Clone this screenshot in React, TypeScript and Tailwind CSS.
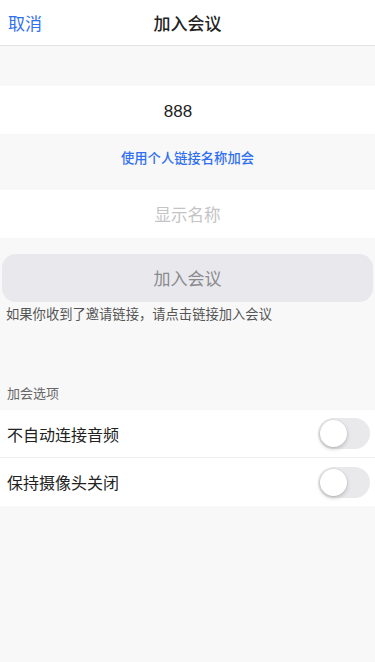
import React from "react";

const font = { fontFamily: '"Noto Sans CJK SC", "Noto Sans", sans-serif' };

function Toggle() {
  return (
    <div className="w-[52px] h-[31px] rounded-full bg-[#e9e9eb] relative shrink-0">
      <div className="absolute left-[2px] top-[2px] w-[27px] h-[27px] rounded-full bg-white shadow-[0_2px_4px_rgba(0,0,0,0.2),0_0_0_0.5px_rgba(0,0,0,0.06)]" />
    </div>
  );
}

export default function App() {
  return (
    <div className="w-[375px] h-[662px] bg-[#f8f8f8] flex flex-col" style={font}>
      <div className="h-[46px] bg-white border-b border-[#e3e3e3] flex items-center relative shrink-0">
        <span className="absolute left-[8px] text-[17px] text-[#2f6ff0]">取消</span>
        <span className="w-full text-center text-[17px] font-medium text-[#222]">加入会议</span>
      </div>
      <div className="h-[40px] shrink-0" />
      <div className="h-[48px] bg-white flex items-center justify-center pr-[19px] pt-[4px] text-[17px] text-[#222] shrink-0" style={{ fontFamily: '"Liberation Sans", "Noto Sans", sans-serif' }}>
        888
      </div>
      <div className="h-[56px] flex items-center justify-center pb-[8px] text-[13.3px] font-medium text-[#2f6ff0] shrink-0">
        使用个人链接名称加会
      </div>
      <div className="h-[48px] bg-white flex items-center justify-center text-[16.5px] text-[#c4c4c6] shrink-0">
        显示名称
      </div>
      <div className="px-[2px] pt-[16px] shrink-0">
        <div className="h-[48px] rounded-[14px] bg-[#e8e8ed] flex items-center justify-center text-[17px] text-[#8a8a8e]">
          加入会议
        </div>
      </div>
      <div className="px-[6px] pt-[3px] text-[13.3px] text-[#555] leading-[18px]">
        如果你收到了邀请链接，请点击链接加入会议
      </div>
      <div className="px-[7px] pt-[61px] pb-[8px] text-[13px] text-[#666] leading-[18px]">加会选项</div>
      <div className="bg-white">
        <div className="h-[48px] flex items-center justify-between pl-[7px] pr-[5px] border-b border-[#efefef]">
          <span className="text-[16px] text-[#222]">不自动连接音频</span>
          <Toggle />
        </div>
        <div className="h-[48px] flex items-center justify-between pl-[7px] pr-[5px]">
          <span className="text-[16px] text-[#222]">保持摄像头关闭</span>
          <Toggle />
        </div>
      </div>
    </div>
  );
}
